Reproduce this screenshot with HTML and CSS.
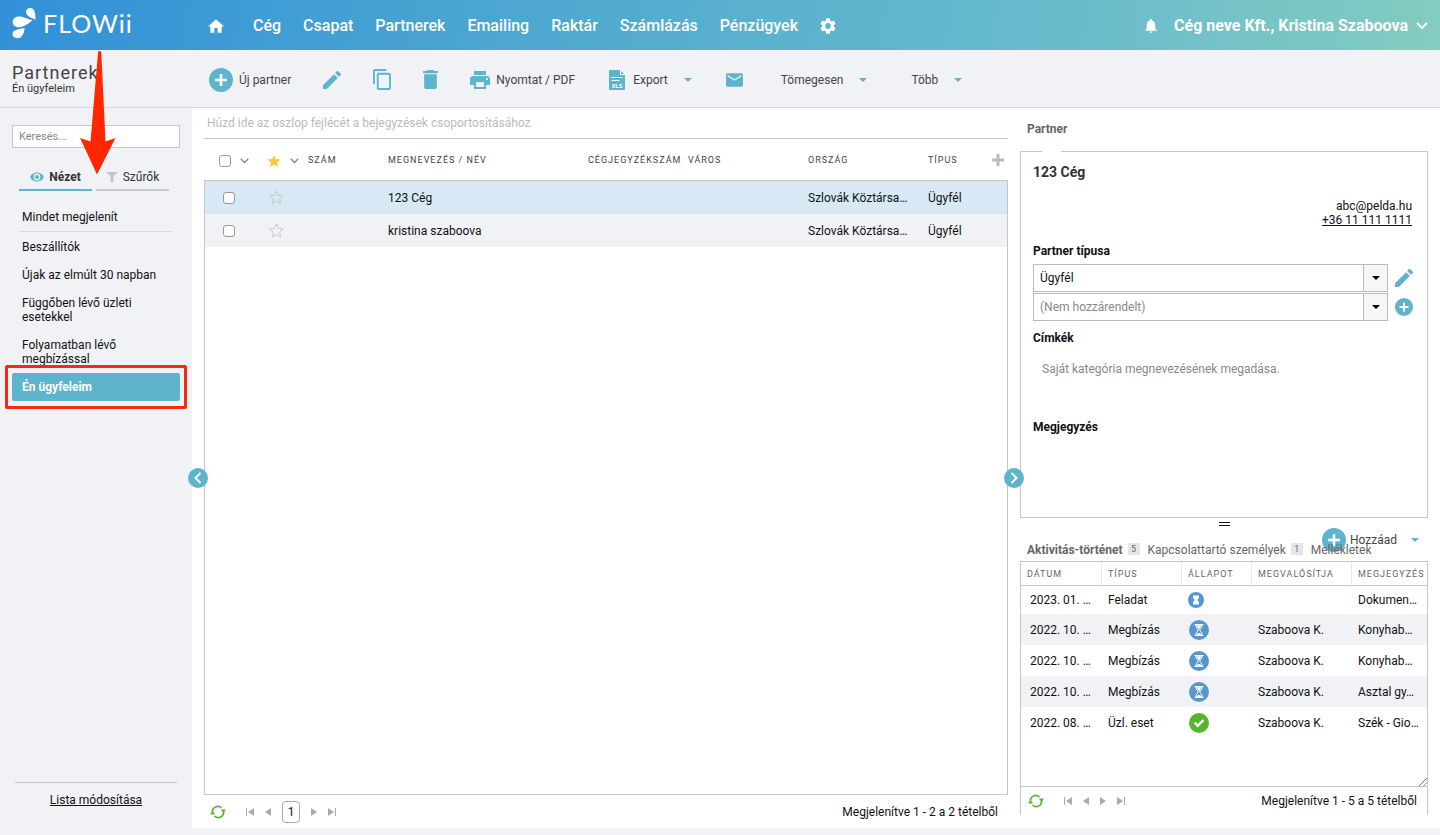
FILE: index.html
```html
<!DOCTYPE html>
<html lang="hu">
<head>
    <meta charset="UTF-8">
    <meta name="viewport" content="width=device-width, initial-scale=1.0">
    <title>FLOWii - Partnerek</title>
    <link rel="stylesheet" href="styles.css">
</head>
<body>
    <svg class="sprite" aria-hidden="true">
        <symbol id="i-plus" viewBox="0 0 24 24"><circle cx="12" cy="12" r="12"/><path d="M12 6v12M6 12h12" stroke="#fff" stroke-width="2.6"/></symbol>
        <symbol id="i-edit" viewBox="3 3 18 18"><path d="M3 17.25V21h3.75L17.81 9.94l-3.75-3.75L3 17.25zM20.71 7.04a1 1 0 0 0 0-1.41l-2.34-2.34a1 1 0 0 0-1.41 0l-1.83 1.83 3.75 3.75 1.83-1.83z"/></symbol>
        <symbol id="i-caret" viewBox="0 0 10 5"><path d="M0 0h10L5 5z"/></symbol>
        <symbol id="i-chevron" viewBox="0 0 12 8"><path d="M1 1l5 5 5-5" fill="none" stroke="currentColor" stroke-width="1.8"/></symbol>
        <symbol id="i-star" viewBox="0 0 24 24"><path d="M12 1.5l3.1 7.2 7.9.7-6 5.2 1.8 7.7L12 18.2l-6.8 4.1L7 14.6 1 9.4l7.9-.7z"/></symbol>
        <symbol id="i-refresh" viewBox="0 0 16 14"><path d="M2.6 8A5.3 5.3 0 0 1 11.5 3M13.4 6A5.3 5.3 0 0 1 4.5 11" fill="none" stroke="currentColor" stroke-width="1.7"/><path d="M0 9.500h5.200L2.600 6.200zM16 4.500h-5.200l2.600 3.300z"/></symbol>
        <symbol id="i-prev" viewBox="0 0 6 8"><path d="M6 0v8L0 4z"/></symbol>
        <symbol id="i-next" viewBox="0 0 6 8"><path d="M0 0v8l6-4z"/></symbol>
        <symbol id="i-first" viewBox="0 0 8 8"><path d="M0 0h1v8H0zM8 0v8L2 4z"/></symbol>
        <symbol id="i-last" viewBox="0 0 8 8"><path d="M7 0h1v8H7zM0 0v8l6-4z"/></symbol>
        <symbol id="i-glass" viewBox="0 0 20 20"><circle cx="10" cy="10" r="10" fill="#5596cf"/><path d="M5.5 4.5h9M5.5 15.5h9" stroke="#fff" stroke-width="1.2"/><path d="M6.8 5c0 3 2.400 3.600 2.400 5s-2.400 2-2.400 5h6.400c0-3-2.400-3.600-2.400-5s2.400-2 2.400-5z" fill="none" stroke="#fff"/><path d="M7.500 5.500h5L10 9.500zM7.500 15c.5-1.500 1.500-2 2.500-2s2 .5 2.500 2z" fill="#fff"/></symbol>
    </svg>

    <header class="header">
        <a href="#" class="logo">
            <svg width="26" height="32" viewBox="0 0 26 32" fill="#fff" aria-hidden="true">
                <path d="M23.6 12.500C18 11 14 8 14 5c0-2.500 2-4 4.300-4 4 0 5.300 4.500 5.300 11.500z"/>
                <path d="M20.700 13C17 16 12 20.300 7 20.300 3 20.300.7 17.800.7 15 .7 12 3 9.500 7 9.500c5 0 8 2.800 13.700 3.500z"/>
                <path d="M12.500 21c0 5-2.500 10.300-7 10.300-3 0-5-1.800-5-4.300 0-4 5-4.500 12-6z"/>
            </svg>
            <span>FLOWii</span>
        </a>
        <nav class="nav">
            <a href="#" class="nav-home" aria-label="Home"><svg width="16" height="14" viewBox="2 3 20 17"><path d="M10 20v-6h4v6h5v-8h3L12 3 2 12h3v8z"/></svg></a>
            <a href="#">Cég</a>
            <a href="#">Csapat</a>
            <a href="#">Partnerek</a>
            <a href="#">Emailing</a>
            <a href="#">Raktár</a>
            <a href="#">Számlázás</a>
            <a href="#">Pénzügyek</a>
            <a href="#" aria-label="Settings"><svg width="16" height="16" viewBox="2 2 20 20"><path d="M19.14 12.94c.04-.3.06-.61.06-.94 0-.32-.02-.64-.07-.94l2.03-1.58a.49.49 0 0 0 .12-.61l-1.92-3.32a.488.488 0 0 0-.59-.22l-2.39.96c-.5-.38-1.03-.7-1.62-.94l-.36-2.54a.484.484 0 0 0-.48-.41h-3.84c-.24 0-.43.17-.47.41l-.36 2.54c-.59.24-1.13.57-1.62.94l-2.39-.96c-.22-.08-.47 0-.59.22L2.74 8.87c-.12.21-.08.47.12.61l2.03 1.58c-.05.3-.09.63-.09.94s.02.64.07.94l-2.03 1.58a.49.49 0 0 0-.12.61l1.92 3.32c.12.22.37.29.59.22l2.39-.96c.5.38 1.03.7 1.62.94l.36 2.54c.05.24.24.41.48.41h3.84c.24 0 .44-.17.47-.41l.36-2.54c.59-.24 1.13-.56 1.62-.94l2.39.96c.22.08.47 0 .59-.22l1.92-3.32c.12-.22.07-.47-.12-.61l-2.01-1.58zM12 15.600A3.610 3.610 0 0 1 8.400 12c0-1.980 1.620-3.600 3.600-3.600s3.600 1.620 3.600 3.600-1.620 3.600-3.600 3.600z"/></svg></a>
        </nav>
        <div class="account">
            <a href="#" aria-label="Notifications"><svg width="12" height="14" viewBox="4 2.5 16 19.5"><path d="M12 22c1.1 0 2-.9 2-2h-4c0 1.1.89 2 2 2zm6-6v-5c0-3.07-1.64-5.64-4.5-6.32V4c0-.83-.67-1.5-1.5-1.5s-1.5.67-1.5 1.5v.68C7.63 5.36 6 7.92 6 11v5l-2 2v1h16v-1l-2-2z"/></svg></a>
            <button type="button" class="account-name">Cég neve Kft., Kristina Szaboova <svg width="12" height="8"><use href="#i-chevron"/></svg></button>
        </div>
    </header>

    <div class="toolbar">
        <div class="page-title">
            <h1>Partnerek</h1>
            <p>Én ügyfeleim</p>
        </div>
        <div class="tools">
            <button type="button" class="tool"><svg width="24" height="24"><use href="#i-plus"/></svg>Új partner</button>
            <button type="button" class="tool" aria-label="Edit"><svg width="18" height="18"><use href="#i-edit"/></svg></button>
            <button type="button" class="tool" aria-label="Copy"><svg width="18" height="21" viewBox="2 1 19 22"><path d="M16 1H4c-1.1 0-2 .9-2 2v14h2V3h12V1zm3 4H8c-1.1 0-2 .9-2 2v14c0 1.1.9 2 2 2h11c1.1 0 2-.9 2-2V7c0-1.1-.9-2-2-2zm0 16H8V7h11v14z"/></svg></button>
            <button type="button" class="tool" aria-label="Delete"><svg width="15" height="19" viewBox="5 3 14 18"><path d="M6 19c0 1.1.9 2 2 2h8c1.1 0 2-.9 2-2V7H6v12zM19 4h-3.500l-1-1h-5l-1 1H5v2h14V4z"/></svg></button>
            <button type="button" class="tool"><svg width="20" height="18" viewBox="2 3 20 18"><path d="M19 8H5c-1.66 0-3 1.34-3 3v6h4v4h12v-4h4v-6c0-1.66-1.34-3-3-3zm-3 11H8v-5h8v5zm3-7c-.55 0-1-.45-1-1s.45-1 1-1 1 .45 1 1-.45 1-1 1zm-1-9H6v4h12V3z"/></svg>Nyomtat / PDF</button>
            <button type="button" class="tool tool-menu with-icon"><svg width="16" height="20" viewBox="0 0 16 20"><path d="M1 0h10l5 5v14a1 1 0 0 1-1 1H1a1 1 0 0 1-1-1V1a1 1 0 0 1 1-1z"/><path d="M11.500 0v4.500H16M2.500 7.500h11M2.500 10.500h8" fill="none" stroke="#fff"/><text x="8" y="17.5" class="xls" text-anchor="middle">XLS</text></svg><span>Export</span><svg class="caret" width="8" height="4"><use href="#i-caret"/></svg></button>
            <button type="button" class="tool" aria-label="Email"><svg width="17" height="14" viewBox="2 4 20 16"><path d="M20 4H4c-1.1 0-1.99.9-1.99 2L2 18c0 1.1.9 2 2 2h16c1.1 0 2-.9 2-2V6c0-1.1-.9-2-2-2zm0 4l-8 5-8-5V6l8 5 8-5v2z"/></svg></button>
            <button type="button" class="tool tool-menu"><span>Tömegesen</span><svg class="caret" width="8" height="4"><use href="#i-caret"/></svg></button>
            <button type="button" class="tool tool-menu"><span>Több</span><svg class="caret" width="8" height="4"><use href="#i-caret"/></svg></button>
        </div>
    </div>

    <div class="workspace">
        <aside class="sidebar">
            <input type="text" class="search" placeholder="Keresés..." aria-label="Keresés">
            <div class="side-tabs">
                <button type="button" class="side-tab active"><svg width="14" height="10" viewBox="0 0 14 10"><path d="M0 5c2.5-6 11.5-6 14 0-2.5 6-11.5 6-14 0z"/><circle cx="7" cy="5" r="3.4" fill="#f1f2f6"/><circle cx="7" cy="5" r="2"/></svg>Nézet</button>
                <button type="button" class="side-tab"><svg width="12" height="10" viewBox="0 0 12 10"><path d="M0 0h12L7.5 4.5V10h-3V4.5z"/></svg>Szűrők</button>
            </div>
            <ul class="views">
                <li class="view-all"><a href="#">Mindet megjelenít</a></li>
                <li><a href="#">Beszállítók</a></li>
                <li><a href="#">Újak az elmúlt 30 napban</a></li>
                <li><a href="#">Függőben lévő üzleti esetekkel</a></li>
                <li><a href="#">Folyamatban lévő megbízással</a></li>
                <li class="current"><a href="#">Én ügyfeleim</a></li>
            </ul>
            <div class="side-footer"><a href="#">Lista módosítása</a></div>
        </aside>

        <main class="main">
            <section class="grid">
                <p class="group-hint">Húzd ide az oszlop fejlécét a bejegyzések csoportosításához</p>
                <table class="partners">
                    <colgroup>
                        <col class="c-check"><col class="c-star"><col class="c-num"><col class="c-name"><col class="c-reg"><col class="c-city"><col class="c-city"><col>
                    </colgroup>
                    <thead>
                        <tr>
                            <th><span class="head-pick"><input type="checkbox" aria-label="Összes kijelölése"><svg width="9" height="6"><use href="#i-chevron"/></svg></span></th>
                            <th><span class="head-pick"><svg class="star-on" width="14" height="14"><use href="#i-star"/></svg><svg width="9" height="6"><use href="#i-chevron"/></svg></span></th>
                            <th>Szám</th>
                            <th>Megnevezés / Név</th>
                            <th>Cégjegyzékszám</th>
                            <th>Város</th>
                            <th>Ország</th>
                            <th><span class="head-last">Típus<button type="button" class="add-col" aria-label="Oszlop"><svg width="12" height="12" viewBox="0 0 12 12"><path d="M4.5 0h3v4.5H12v3H7.5V12h-3V7.5H0v-3h4.5z"/></svg></button></span></th>
                        </tr>
                    </thead>
                    <tbody>
                        <tr class="selected">
                            <td><input type="checkbox" aria-label="123 Cég"></td>
                            <td><svg class="star-off" width="15" height="15"><use href="#i-star"/></svg></td>
                            <td></td>
                            <td>123 Cég</td>
                            <td></td>
                            <td></td>
                            <td>Szlovák Köztársaság</td>
                            <td>Ügyfél</td>
                        </tr>
                        <tr>
                            <td><input type="checkbox" aria-label="kristina szaboova"></td>
                            <td><svg class="star-off" width="15" height="15"><use href="#i-star"/></svg></td>
                            <td></td>
                            <td>kristina szaboova</td>
                            <td></td>
                            <td></td>
                            <td>Szlovák Köztársaság</td>
                            <td>Ügyfél</td>
                        </tr>
                    </tbody>
                </table>
                <div class="grid-rest"></div>
                <div class="pager pager-main">
                    <button type="button" class="refresh" aria-label="Frissítés"><svg width="16" height="14"><use href="#i-refresh"/></svg></button>
                    <button type="button" aria-label="Első"><svg width="8" height="8"><use href="#i-first"/></svg></button>
                    <button type="button" aria-label="Előző"><svg width="6" height="8"><use href="#i-prev"/></svg></button>
                    <span class="page-no">1</span>
                    <button type="button" aria-label="Következő"><svg width="6" height="8"><use href="#i-next"/></svg></button>
                    <button type="button" aria-label="Utolsó"><svg width="8" height="8"><use href="#i-last"/></svg></button>
                    <span class="pager-info">Megjelenítve 1 - 2 a 2 tételből</span>
                </div>
            </section>

            <section class="side-panel">
                <h2 class="panel-title">Partner</h2>
                <div class="detail">
                    <h3 class="detail-name">123 Cég</h3>
                    <div class="contact">
                        <span>abc@pelda.hu</span>
                        <a href="tel:+36111111111">+36 11 111 1111</a>
                    </div>
                    <label class="field-label" for="type1">Partner típusa</label>
                    <div class="field">
                        <span class="combo"><select id="type1"><option>Ügyfél</option></select></span>
                        <button type="button" aria-label="Edit"><svg width="18" height="18"><use href="#i-edit"/></svg></button>
                    </div>
                    <div class="field">
                        <span class="combo empty"><select aria-label="Partner típusa 2"><option>(Nem hozzárendelt)</option></select></span>
                        <button type="button" aria-label="Add"><svg width="18" height="18"><use href="#i-plus"/></svg></button>
                    </div>
                    <h4 class="field-label tags-label">Címkék</h4>
                    <p class="tags-hint">Saját kategória megnevezésének megadása.</p>
                    <h4 class="field-label">Megjegyzés</h4>
                </div>
                <div class="splitter"></div>
                <div class="history-tabs">
                    <button type="button" class="add-activity"><svg width="24" height="24"><use href="#i-plus"/></svg><span>Hozzáad</span><svg width="8" height="4"><use href="#i-caret"/></svg></button>
                    <a href="#" class="active">Aktivitás-történet</a><span class="count">5</span>
                    <a href="#">Kapcsolattartó személyek</a><span class="count">1</span>
                    <a href="#">Mellékletek</a>
                </div>
                <div class="history">
                    <div class="history-body">
                        <table class="activity">
                            <colgroup><col class="a-date"><col class="a-type"><col class="a-state"><col class="a-who"><col></colgroup>
                            <thead>
                                <tr><th>Dátum</th><th>Típus</th><th>Állapot</th><th>Megvalósítja</th><th>Megjegyzés</th></tr>
                            </thead>
                            <tbody>
                                <tr class="short"><td>2023. 01. …</td><td>Feladat</td><td><svg width="16" height="16" viewBox="0 0 16 16"><circle cx="8" cy="8" r="8" fill="#5596cf"/><path d="M5 3.5h6V5c0 1.500-1.500 2-1.500 3s1.500 1.500 1.500 3v1.500H5V11c0-1.500 1.500-2 1.500-3S5 6.500 5 5z" fill="#fff"/></svg></td><td></td><td>Dokumen…</td></tr>
                                <tr><td>2022. 10. …</td><td>Megbízás</td><td><svg class="state" width="20" height="20"><use href="#i-glass"/></svg></td><td>Szaboova K.</td><td>Konyhab…</td></tr>
                                <tr><td>2022. 10. …</td><td>Megbízás</td><td><svg class="state" width="20" height="20"><use href="#i-glass"/></svg></td><td>Szaboova K.</td><td>Konyhab…</td></tr>
                                <tr><td>2022. 10. …</td><td>Megbízás</td><td><svg class="state" width="20" height="20"><use href="#i-glass"/></svg></td><td>Szaboova K.</td><td>Asztal gy…</td></tr>
                                <tr><td>2022. 08. …</td><td>Üzl. eset</td><td><svg class="state" width="20" height="20" viewBox="0 0 20 20"><circle cx="10" cy="10" r="10" fill="#58b530"/><path d="M5.5 9.500l3.200 3.200 5.800-5.700" fill="none" stroke="#fff" stroke-width="2.4"/></svg></td><td>Szaboova K.</td><td>Szék - Gio…</td></tr>
                            </tbody>
                        </table>
                        <svg class="resize" width="8" height="8" viewBox="0 0 8 8"><path d="M0 8L8 0M4.5 8L8 4.5" stroke="#777" fill="none"/></svg>
                    </div>
                    <div class="pager">
                        <button type="button" class="refresh" aria-label="Frissítés"><svg width="16" height="14"><use href="#i-refresh"/></svg></button>
                        <button type="button" aria-label="Első"><svg width="8" height="8"><use href="#i-first"/></svg></button>
                        <button type="button" aria-label="Előző"><svg width="6" height="8"><use href="#i-prev"/></svg></button>
                        <button type="button" aria-label="Következő"><svg width="6" height="8"><use href="#i-next"/></svg></button>
                        <button type="button" aria-label="Utolsó"><svg width="8" height="8"><use href="#i-last"/></svg></button>
                        <span class="pager-info">Megjelenítve 1 - 5 a 5 tételből</span>
                    </div>
                </div>
            </section>
            <button type="button" class="collapse collapse-left" aria-label="Collapse left"><svg width="8" height="12" viewBox="0 0 8 12"><path d="M6.5 1l-5 5 5 5"/></svg></button>
            <button type="button" class="collapse collapse-right" aria-label="Collapse right"><svg width="8" height="12" viewBox="0 0 8 12"><path d="M1.5 1l5 5-5 5"/></svg></button>
        </main>
    </div>

    <!-- pointer to the view switch -->
    <svg class="arrow" width="36" height="124" viewBox="0 0 36 124" aria-hidden="true"><path d="M19.500 0c1.200 0 1.700.8 1.800 2l4.200 88.500L35.500 87 17 123.500 0 87l10.500 3.500L18 2c0-1.200.5-2 1.500-2z"/></svg>
</body>
</html>
```
FILE: styles.css
```css
* {
    margin: 0;
    padding: 0;
    box-sizing: border-box;
}

body {
    display: flex;
    flex-direction: column;
    min-height: 100vh;
    font-family: Roboto, "Liberation Sans", sans-serif;
    font-size: 12px;
    line-height: 14px;
    color: #111;
    background: #f1f2f6;
}

a {
    color: inherit;
    text-decoration: none;
}

button {
    font: inherit;
    color: inherit;
    background: none;
    border: 0;
    cursor: pointer;
}

svg {
    display: block;
    flex: none;
    fill: currentColor;
}

.sprite {
    position: absolute;
    width: 0;
    height: 0;
}

/* header */
.header {
    display: flex;
    align-items: center;
    height: 50px;
    padding: 2px 12px 0;
    color: #fff;
    background: linear-gradient(100deg, #3190d8 0%, #58b0ce 50%, #6abccb 75%, #83ccc0 100%);
}

.logo {
    display: flex;
    align-items: center;
    gap: 5px;
    width: 196px;
    height: 42px;
    align-self: flex-start;
    font-family: Lato, sans-serif;
    font-size: 25px;
    line-height: 30px;
    letter-spacing: 1px;
}

.nav {
    display: flex;
    align-items: center;
    gap: 22px;
    font-size: 16px;
    font-weight: 500;
    line-height: 20px;
}

.nav-home {
    width: 23px;
}

.account {
    display: flex;
    align-items: center;
    gap: 17px;
    margin-left: auto;
}

.account-name {
    display: flex;
    align-items: center;
    gap: 8px;
    font-size: 16px;
    font-weight: 700;
    line-height: 20px;
}

/* toolbar */
.toolbar {
    display: flex;
    align-items: center;
    height: 58px;
    padding-top: 2px;
    border-bottom: 1px solid #d3d6dc;
    color: #444;
}

.page-title {
    width: 193px;
    padding-left: 12px;
}

.page-title h1 {
    font-size: 18px;
    font-weight: 400;
    line-height: 18px;
    letter-spacing: 1px;
}

.page-title p {
    font-size: 11px;
    line-height: 14px;
    color: #333;
}

.tools {
    display: flex;
    align-items: center;
}

.tool {
    display: flex;
    align-items: center;
    gap: 6px;
    height: 40px;
    padding: 0 16px;
}

.tool svg,
.field svg,
.add-activity svg {
    color: #5eb3cd;
}

.tool-menu {
    gap: 8px;
    padding: 0 22px;
}

.tool-menu.with-icon {
    padding: 0 18px;
}

.tool-menu .caret {
    margin-left: 8px;
}

.xls {
    font-size: 6px;
    font-weight: 700;
    fill: #fff;
}

/* sidebar */
.workspace {
    flex: 1;
    display: flex;
}

.sidebar {
    display: flex;
    flex-direction: column;
    width: 192px;
    padding: 17px 12px 28px;
}

.search {
    height: 23px;
    padding: 0 6px;
    font: inherit;
    font-size: 11px;
    border: 1px solid #c4c6ca;
    background: #fff;
}

.search::placeholder {
    color: #888;
}

.side-tabs {
    display: flex;
    gap: 4px;
    margin-top: 17px;
    padding: 0 11px 0 7px;
}

.side-tab {
    flex: 1;
    display: flex;
    align-items: center;
    justify-content: center;
    gap: 5px;
    height: 26px;
    border-bottom: 2px solid #c9cbcf;
    color: #333;
}

.side-tab svg {
    color: #c4c6ca;
}

.side-tab.active {
    font-weight: 700;
    border-color: #5eb3cd;
}

.side-tab.active svg {
    color: #5eb3cd;
}

.views {
    margin-top: 12px;
    list-style: none;
}

.views a {
    display: block;
    padding: 7px 10px;
}

.view-all {
    margin: 0 8px 1px 7px;
    border-bottom: 1px solid #dadce0;
}

.view-all a {
    padding: 7px 3px;
}

.current {
    position: relative;
}

.current a {
    border-radius: 2px;
    font-weight: 700;
    color: #fff;
    background: #5eb3cd;
}

.current::after {
    content: "";
    position: absolute;
    inset: -8px -7px;
    border: 3px solid #f32b12;
    border-radius: 2px;
    pointer-events: none;
}

.side-footer {
    margin: auto 3px 0;
    padding-top: 10px;
    border-top: 1px solid #c4c6ca;
    text-align: center;
}

.side-footer a {
    text-decoration: underline;
}

/* main area */
.main {
    position: relative;
    flex: 1;
    display: flex;
    gap: 12px;
    min-width: 0;
    margin-bottom: 7px;
    padding: 0 12px;
    background: #fff;
}

.grid {
    flex: 1;
    display: flex;
    flex-direction: column;
    min-width: 0;
}

.group-hint {
    height: 31px;
    padding: 8px 3px;
    border-bottom: 1px solid #c4c6ca;
    color: #bbb;
}

table {
    width: 100%;
    table-layout: fixed;
    border-collapse: separate;
    border-spacing: 0;
}

th {
    font-size: 9px;
    font-weight: 400;
    letter-spacing: 1px;
    text-align: left;
    text-transform: uppercase;
    white-space: nowrap;
    color: #444;
}

td {
    overflow: hidden;
    text-overflow: ellipsis;
    white-space: nowrap;
}

.partners th {
    height: 42px;
    padding-left: 10px;
    border-bottom: 1px solid #c4c6ca;
}

.partners td {
    height: 33px;
    padding: 0 10px;
    background: #f1f2f6;
}

.partners .selected td {
    background: #d6e9f5;
}

.partners th:first-child {
    padding-left: 15px;
}

.partners td:first-child {
    padding-left: 18px;
    border-left: 1px solid #c4c6ca;
}

.partners td:last-child {
    border-right: 1px solid #c4c6ca;
}

.partners th:nth-child(2) {
    padding: 0 0 0 9px;
}

.partners td:nth-child(2) {
    padding: 0 0 0 11px;
}

.c-check { width: 54px; }
.c-star { width: 40px; }
.c-num { width: 80px; }
.c-name { width: 200px; }
.c-reg { width: 100px; }
.c-city { width: 120px; }

input[type="checkbox"] {
    display: block;
    appearance: none;
    width: 12px;
    height: 12px;
    border: 1px solid #999;
    border-radius: 3px;
    background: #fff;
}

.head-pick {
    display: flex;
    align-items: center;
    gap: 9px;
    padding-top: 2px;
    color: #888;
}

.star-on {
    color: #fcc92e;
}

.star-off {
    fill: none;
    stroke: #c4c6ca;
    stroke-width: 1.5px;
}

.head-last {
    display: flex;
    align-items: center;
    justify-content: space-between;
    padding-right: 4px;
}

.add-col {
    color: #bbb;
}

.grid-rest {
    flex: 1;
    border: 1px solid #c4c6ca;
    border-top: 0;
}

/* pagers */
.pager {
    display: flex;
    align-items: center;
    gap: 11px;
    height: 28px;
    padding: 0 10px 0 7px;
    color: #aaa;
}

.pager .refresh {
    margin-right: 9px;
    color: #58b530;
}

.pager-main {
    height: 33px;
    padding: 0 10px 0 6px;
}

.page-no {
    width: 18px;
    height: 22px;
    border: 1px solid #aaa;
    border-radius: 4px;
    line-height: 20px;
    text-align: center;
    color: #111;
}

.pager-info {
    margin-left: auto;
    color: #111;
}

/* right panel */
.side-panel {
    display: flex;
    flex-direction: column;
    width: 408px;
    padding-bottom: 13px;
}

.panel-title {
    height: 43px;
    padding: 14px 7px;
    font-size: 12px;
    font-weight: 700;
    color: #666;
}

.detail {
    position: relative;
    flex: 1;
    padding: 12px;
    border: 1px solid #c4c6ca;
}

/* gap in the border under the active tab */
.detail::before {
    content: "";
    position: absolute;
    top: -1px;
    left: 21px;
    width: 19px;
    height: 1px;
    background: #fff;
}

.detail-name {
    font-size: 14px;
    line-height: 16px;
    color: #333;
}

.contact {
    display: flex;
    flex-direction: column;
    align-items: flex-end;
    margin: 19px 3px 17px;
}

.contact a {
    text-decoration: underline;
}

.field-label {
    display: block;
    margin-bottom: 6px;
    font-size: 12px;
    font-weight: 700;
}

.field {
    display: flex;
    align-items: center;
    gap: 7px;
    margin-bottom: 1px;
}

.combo {
    position: relative;
    flex: 1;
}

.field button {
    margin-right: 2px;
}

.combo select {
    display: block;
    appearance: none;
    width: 100%;
    height: 28px;
    padding: 0 6px;
    font: inherit;
    color: inherit;
    border: 1px solid #bbb;
    border-radius: 0;
    background: #fff;
}

.combo.empty {
    color: #888;
}

.combo::before,
.combo::after {
    content: "";
    position: absolute;
    pointer-events: none;
}

.combo::before {
    top: 1px;
    right: 1px;
    bottom: 1px;
    width: 23px;
    border-left: 1px solid #bbb;
    background: #f6f6f6;
}

.combo::after {
    top: 12px;
    right: 8px;
    border: 4px solid transparent;
    border-top-color: #000;
    border-bottom: 0;
}

.tags-label {
    margin-top: 10px;
}

.tags-hint {
    margin: 17px 9px 44px;
    color: #888;
}

.splitter {
    width: 11px;
    height: 4px;
    margin: 4px auto;
    border: solid #111;
    border-width: 1px 0;
}

.history-tabs {
    position: relative;
    display: flex;
    gap: 8px;
    height: 31px;
    padding: 13px 7px 0;
    white-space: nowrap;
    color: #666;
}

.history-tabs a {
    position: relative;
}

.history-tabs .active {
    font-weight: 700;
}

.history-tabs .count {
    width: 12px;
    height: 12px;
    margin-left: -3px;
    font-size: 9px;
    line-height: 12px;
    text-align: center;
    background: #e6e6e6;
}

.add-activity {
    position: absolute;
    top: -2px;
    right: 9px;
    display: flex;
    align-items: center;
    gap: 4px;
    color: #444;
}

.add-activity span {
    margin-right: 10px;
}

.history {
    border: solid #c4c6ca;
    border-width: 1px 1px 0;
}

.history-body {
    position: relative;
    height: 225px;
    border-bottom: 1px solid #c4c6ca;
}

.activity th {
    height: 24px;
    padding-left: 6px;
    border-right: 1px solid #e8e8e8;
    border-bottom: 1px solid #c4c6ca;
    color: #666;
}

.activity th:last-child {
    border-right: 0;
}

.activity td {
    height: 31px;
    padding: 0 4px 0 6px;
}

.activity td:first-child {
    padding-left: 9px;
}

.activity .short td {
    height: 28px;
}

.activity tbody tr:nth-child(even) {
    background: #f1f2f6;
}

.activity .state {
    margin-left: 1px;
}

.a-date { width: 81px; }
.a-type { width: 80px; }
.a-state { width: 70px; }
.a-who { width: 100px; }

.resize {
    position: absolute;
    right: 0;
    bottom: 0;
}

/* round panel toggles */
.collapse {
    position: absolute;
    top: 360px;
    display: flex;
    align-items: center;
    justify-content: center;
    width: 20px;
    height: 20px;
    border-radius: 50%;
    background: #5eb3cd;
}

.collapse svg {
    fill: none;
    stroke: #fff;
    stroke-width: 2px;
}

.collapse-left {
    left: -4px;
}

.collapse-right {
    right: 416px;
}

.arrow {
    position: absolute;
    top: 51px;
    left: 80px;
    color: #ff2600;
    pointer-events: none;
}
```
